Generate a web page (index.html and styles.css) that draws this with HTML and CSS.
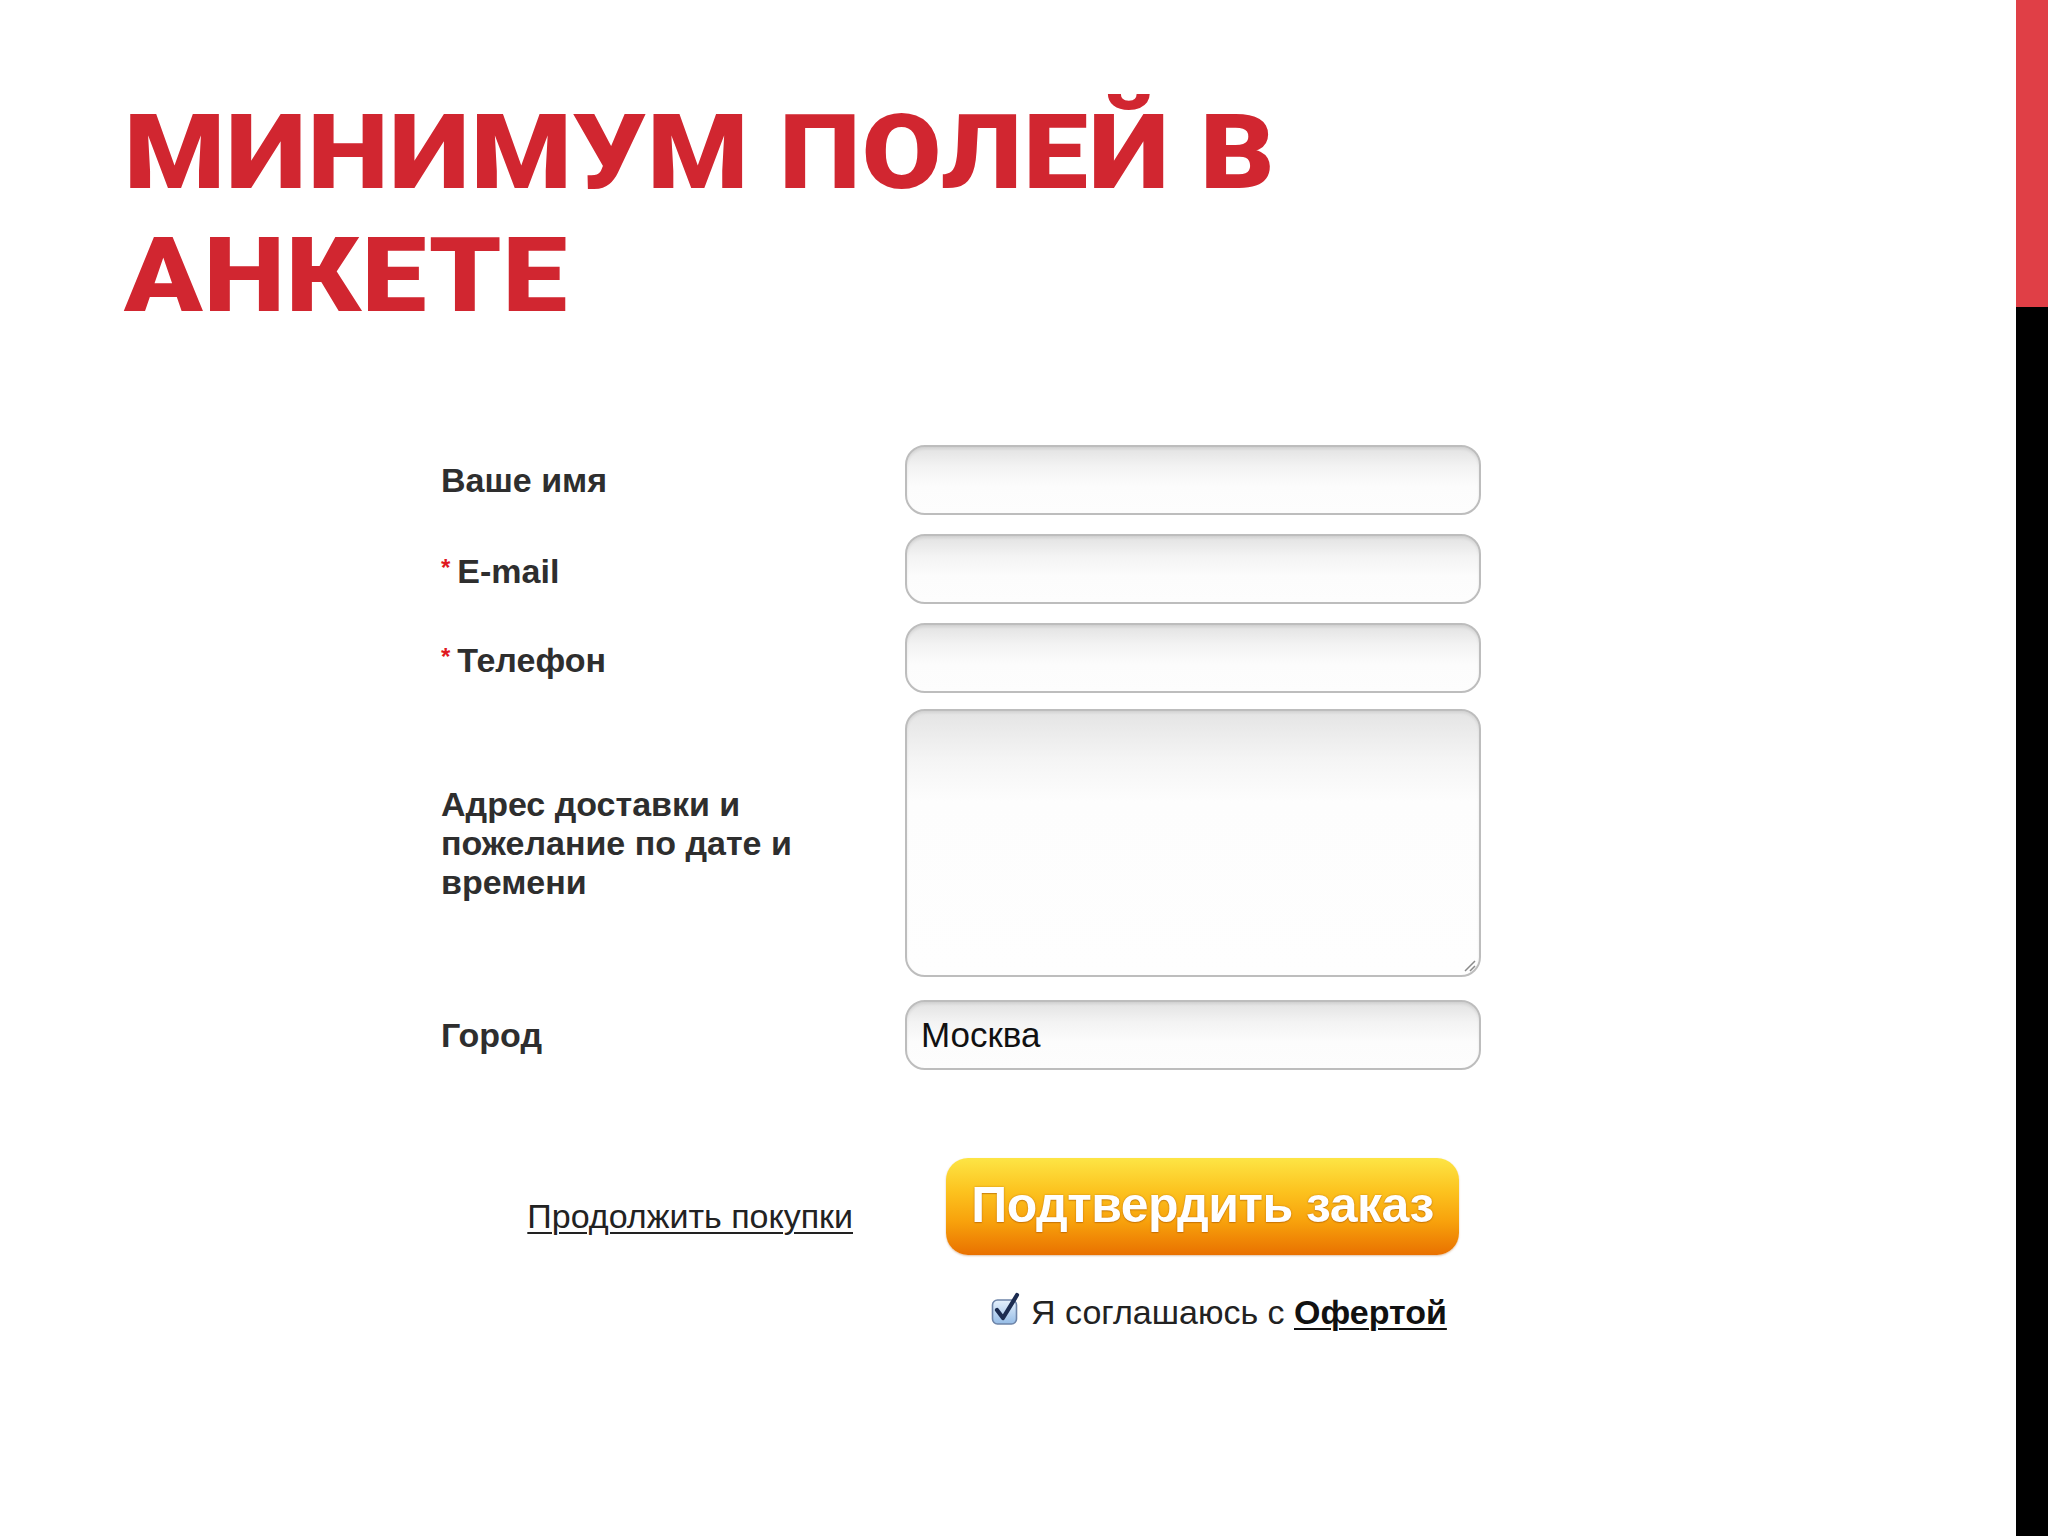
FILE: index.html
```html
<!DOCTYPE html>
<html lang="ru">
<head>
<meta charset="utf-8">
<title>Минимум полей в анкете</title>
<link rel="stylesheet" href="styles.css">
</head>
<body>
<div class="slide">
  <div class="content">
    <h1 class="title"><span class="title-text">МИНИМУМ ПОЛЕЙ В<br>АНКЕТЕ</span></h1>
    <form class="order-form">
      <div class="row">
        <label class="label">Ваше имя</label>
        <div class="field"></div>
      </div>
      <div class="row">
        <label class="label"><span class="req">*</span>E-mail</label>
        <div class="field"></div>
      </div>
      <div class="row row-phone">
        <label class="label"><span class="req">*</span>Телефон</label>
        <div class="field"></div>
      </div>
      <div class="row row-area">
        <label class="label label-wrap">Адрес доставки и пожелание по дате и времени</label>
        <div class="field field-area">
          <svg class="grip" width="16" height="16" viewBox="0 0 16 16"><path d="M15 5 L5 15 M15 10 L10 15" stroke="#8a8a8a" stroke-width="1.5" fill="none"/></svg>
        </div>
      </div>
      <div class="row row-city">
        <label class="label">Город</label>
        <div class="field"><span class="value">Москва</span></div>
      </div>
      <div class="actions">
        <div class="link-cell"><a class="continue">Продолжить покупки</a></div>
        <div class="btn-cell"><div class="btn">Подтвердить заказ</div></div>
      </div>
      <div class="agree-row">
        <div class="agree">
          <svg class="check" width="30" height="34" viewBox="0 0 30 34">
            <defs>
              <linearGradient id="cb" x1="0" y1="0" x2="0" y2="1">
                <stop offset="0" stop-color="#e6f1fc"/>
                <stop offset="1" stop-color="#95bce6"/>
              </linearGradient>
            </defs>
            <rect x="1.5" y="8" width="24" height="24" rx="5" fill="url(#cb)" stroke="#6d84a8" stroke-width="1.6"/>
            <path d="M6 18 L12 26 L26 3" stroke="#1c2c50" stroke-width="4.2" fill="none" stroke-linecap="round" stroke-linejoin="round"/>
          </svg>
          <span class="agree-text">Я соглашаюсь с <a class="offer">Офертой</a></span>
        </div>
      </div>
    </form>
  </div>
  <div class="side">
    <div class="side-red"></div>
    <div class="side-black"></div>
  </div>
</div>
</body>
</html>
```
FILE: styles.css
```css
* { box-sizing: border-box; }
html, body { margin: 0; padding: 0; background: #fff; }
body { width: 2048px; height: 1536px; overflow: hidden; font-family: "Liberation Sans", Arial, sans-serif; }

.slide { display: flex; width: 2048px; height: 1536px; }
.content { flex: 1; }

.side { width: 32px; display: flex; flex-direction: column; }
.side-red { height: 307px; background: #e03f46; }
.side-black { flex: 1; background: #000; }

.title {
  margin: 0;
  padding: 91px 0 0 124px;
  font-family: Roboto, "Liberation Sans", sans-serif;
  font-weight: 900;
  font-size: 104px;
  line-height: 123px;
  letter-spacing: 1px;
  color: #d12630;
}
.title-text {
  display: inline-block;
  transform: scaleX(1.11);
  transform-origin: left center;
}

.order-form {
  margin: 108px 0 0 441px;
  width: 1040px;
  display: flex;
  flex-direction: column;
}

.row { display: flex; align-items: center; margin-bottom: 19px; }
.row-phone { margin-bottom: 16px; }
.row-area { margin-bottom: 23px; }
.row-city { margin-bottom: 88px; }

.label {
  width: 464px;
  font-size: 34px;
  font-weight: bold;
  color: #2e2e2e;
  line-height: 39px;
}
.label-wrap { padding-right: 50px; }
.req { color: #e0191f; font-size: 24px; vertical-align: 7px; margin-right: 7px; }

.field {
  position: relative;
  width: 576px;
  height: 70px;
  border: 2px solid #bdbdbd;
  border-radius: 20px;
  background: linear-gradient(#e2e2e2 0%, #f3f3f3 30%, #fcfcfc 60%, #fdfdfd 100%);
  box-shadow: inset 0 2px 3px rgba(0,0,0,0.08);
  display: flex;
  align-items: center;
  padding-left: 14px;
}
.field-area {
  height: 268px;
  background: linear-gradient(#e4e4e4 0px, #f5f5f5 50px, #fdfdfd 90px, #fefefe 100%);
}
.grip { position: absolute; right: 3px; bottom: 3px; }
.value { font-size: 35px; color: #111; }

.actions { display: flex; align-items: center; }
.link-cell { width: 464px; display: flex; justify-content: flex-end; padding-right: 52px; padding-top: 20px; }
.continue {
  font-size: 34px;
  color: #222;
  text-decoration: underline;
  text-underline-offset: 4px;
  text-decoration-thickness: 2px;
  white-space: nowrap;
}
.btn-cell { padding-left: 41px; }
.btn {
  width: 513px;
  height: 97px;
  border-radius: 22px;
  background: linear-gradient(#fde545 0%, #fcc21e 35%, #f8a20c 65%, #e97100 100%);
  box-shadow: 0 1px 2px rgba(160,80,0,0.35);
  display: flex;
  align-items: center;
  justify-content: center;
  padding-bottom: 4px;
  color: #fff;
  font-weight: bold;
  font-size: 50px;
  letter-spacing: -0.5px;
  text-shadow: 0 0 2px rgba(170,90,0,0.6), 0 1px 1px rgba(150,70,0,0.4);
  white-space: nowrap;
}

.agree-row { padding-left: 550px; margin-top: 38px; }
.agree { display: flex; align-items: center; gap: 10px; }
.check { flex: none; margin-top: -8px; }
.agree-text { font-size: 34px; color: #222; white-space: nowrap; }
.offer {
  font-weight: bold;
  text-decoration: underline;
  text-underline-offset: 4px;
  text-decoration-thickness: 2px;
  color: #111;
}
```
